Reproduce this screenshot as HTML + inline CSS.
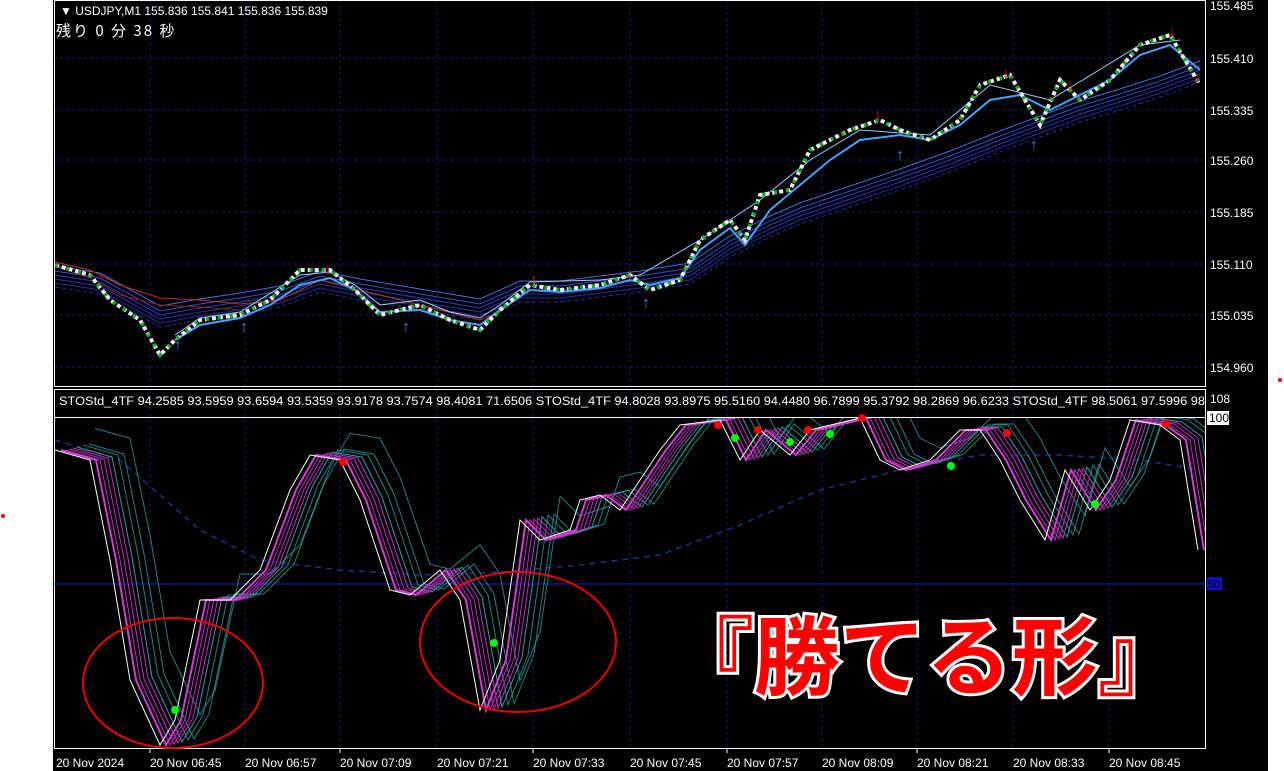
<!DOCTYPE html><html><head><meta charset="utf-8"><style>
body{margin:0;width:1284px;height:771px;background:#fff;overflow:hidden;font-family:"Liberation Sans","Noto Sans CJK JP",sans-serif}
svg{position:absolute;left:0;top:0}
</style></head><body>
<svg width="1284" height="771" viewBox="0 0 1284 771" font-family="Liberation Sans, Noto Sans CJK JP, sans-serif">
<rect x="53" y="0" width="1215" height="771" fill="#000"/>
<g stroke="#1a1a6a" stroke-dasharray="3,3" stroke-width="1">
<line x1="54" y1="58" x2="1206" y2="58"/><line x1="54" y1="110" x2="1206" y2="110"/><line x1="54" y1="160" x2="1206" y2="160"/><line x1="54" y1="212" x2="1206" y2="212"/><line x1="54" y1="264" x2="1206" y2="264"/><line x1="54" y1="315" x2="1206" y2="315"/><line x1="54" y1="367" x2="1206" y2="367"/>
<line x1="150" y1="0" x2="150" y2="748"/><line x1="245" y1="0" x2="245" y2="748"/><line x1="340" y1="0" x2="340" y2="748"/><line x1="437" y1="0" x2="437" y2="748"/><line x1="533" y1="0" x2="533" y2="748"/><line x1="630" y1="0" x2="630" y2="748"/><line x1="727" y1="0" x2="727" y2="748"/><line x1="822" y1="0" x2="822" y2="748"/><line x1="917" y1="0" x2="917" y2="748"/><line x1="1013" y1="0" x2="1013" y2="748"/><line x1="1109" y1="0" x2="1109" y2="748"/>
</g>
<defs><polyline id="ma" fill="none" points="55,285 100,292 160,325 200,318 240,312 280,305 320,290 360,298 420,308 480,318 520,300 560,300 600,295 640,290 690,282 730,255 770,235 800,222 850,205 900,188 950,170 1000,150 1040,135 1080,120 1120,108 1160,95 1200,80"/></defs>
<g stroke-width="1">
<use href="#ma" stroke="#2030a0" transform="translate(0,-2)"/><use href="#ma" stroke="#2535b0" transform="translate(0,-6)"/><use href="#ma" stroke="#2a40c0" transform="translate(0,-10)"/><use href="#ma" stroke="#3050d0" transform="translate(0,-14)"/><use href="#ma" stroke="#4070e0" transform="translate(0,-19)"/><use href="#ma" stroke="#2030a0" stroke-dasharray="4,3" transform="translate(0,2)"/>
</g>
<g fill="none" stroke-width="1">
<polyline stroke="#c03020" points="55,262 90,270 120,285 160,298 200,300 240,304 280,300 320,280 360,290 400,300 440,310 480,320 500,312"/>
<polyline stroke="#902018" points="55,266 90,278 120,295 160,305 200,307 240,310"/>
<polyline stroke="#4aa0ff" stroke-width="2" points="175,340 200,325 240,318 270,305 300,285 330,278 355,290 380,312 420,310 450,320 480,325 500,310 530,290 560,292 600,288 630,280 650,285 680,278 700,250 730,228 745,245 770,210 800,185 830,160 860,140 900,135 930,140 960,125 990,100 1020,95 1050,110 1080,95 1110,80 1140,55 1170,45 1200,70"/>
<polyline stroke="#9fd0ff" points="175,335 200,318 240,312 300,275 330,272 355,285 380,305 420,300 450,312 480,318 500,305 530,282 600,280 640,275 700,240 760,200 810,160 860,130 930,135 990,85 1050,100 1140,45 1180,40"/>
</g>
<g stroke="#eee" stroke-width="4" fill="none">
<polyline stroke-dasharray="4,3" points="55,265 90,275 110,300 140,320 160,355 175,340 200,320 240,315 270,300 300,270 330,270 355,290 380,315 420,305 450,320 480,330 500,310 530,285 560,290 600,285 630,275 650,290 680,280 700,240 730,220 745,240 760,195 790,190 810,150 850,130 880,120 900,130 930,140 960,120 980,85 1010,75 1040,125 1060,80 1080,100 1110,80 1140,45 1170,35 1200,85"/>
<polyline stroke="#1faa2a" stroke-dasharray="3,9" points="55,265 90,275 110,300 140,320 160,355 175,340 200,320 240,315 270,300 300,270 330,270 355,290 380,315 420,305 450,320 480,330 500,310 530,285 560,290 600,285 630,275 650,290 680,280 700,240 730,220 745,240 760,195 790,190 810,150 850,130 880,120 900,130 930,140 960,120 980,85 1010,75 1040,125 1060,80 1080,100 1110,80 1140,45 1170,35 1200,85"/>
</g>
<g fill="#e02020" font-size="16" font-weight="bold"><text x="324" y="274">↓</text><text x="530" y="284">↓</text><text x="626" y="278">↓</text><text x="874" y="120">↓</text><text x="1002" y="78">↓</text><text x="1066" y="90">↓</text><text x="1168" y="36">↓</text><text x="1193" y="82">↓</text></g>
<g fill="#3a8ad8" font-size="16" font-weight="bold"><text x="174" y="350">↑</text><text x="240" y="332">↑</text><text x="402" y="332">↑</text><text x="642" y="308">↑</text><text x="896" y="160">↑</text><text x="1030" y="150">↑</text></g>
<rect x="54.5" y="0.5" width="1151" height="386" fill="none" stroke="#fff"/>
<rect x="54.5" y="389.5" width="1151" height="359" fill="none" stroke="#fff"/>
<line x1="54" y1="417.5" x2="1206" y2="417.5" stroke="#fff"/>
<line x1="54" y1="584" x2="1206" y2="584" stroke="#2020c0"/>
<rect x="1207" y="577" width="15" height="13" fill="#1010c0"/><text x="1208" y="588" font-size="11" fill="#000">50</text>
<polyline fill="none" stroke="#203080" stroke-dasharray="6,5" stroke-width="1.5" points="55,440 120,460 200,530 260,560 340,570 420,575 500,572 580,565 660,555 740,525 820,490 900,470 980,455 1060,455 1140,460 1200,470"/>
<defs><polyline id="st" fill="none" points="55,450 90,460 110,560 130,680 160,745 175,720 200,600 230,600 260,570 290,490 310,455 340,460 360,500 390,590 410,595 440,570 460,600 480,710 500,660 520,520 540,540 570,530 580,500 600,495 620,510 640,480 660,450 680,425 720,420 740,460 760,430 790,455 810,430 860,418 880,460 900,470 930,460 960,430 980,430 1000,460 1020,500 1045,540 1065,470 1090,510 1110,480 1130,420 1160,425 1180,440 1198,550"/></defs>
<clipPath id="c"><rect x="55" y="418" width="1150" height="330"/></clipPath>
<g clip-path="url(#c)">
<use href="#st" stroke="#2aa0a0" transform="translate(40,-8) scale(1,.97)" opacity=".8"/>
<use href="#st" stroke="#2aa0a0" transform="translate(34,-6)" opacity=".8"/>
<use href="#st" stroke="#2aa0a0" transform="translate(28,-5)" opacity=".8"/>
<use href="#st" stroke="#2aa0a0" transform="translate(22,-3)"/>
<use href="#st" stroke="#c030c0" transform="translate(18,-2)"/>
<use href="#st" stroke="#c030c0" transform="translate(14,-1)"/>
<use href="#st" stroke="#c030c0" transform="translate(10,0)"/>
<use href="#st" stroke="#d040d0" transform="translate(6,0)" stroke-width="2"/>
<use href="#st" stroke="#fff"/>
</g>
<g fill="#f00"><circle cx="343" cy="462" r="4"/><circle cx="718" cy="425" r="4"/><circle cx="758" cy="430" r="4"/><circle cx="808" cy="430" r="4"/><circle cx="862" cy="418" r="4"/><circle cx="1007" cy="433" r="4"/><circle cx="1166" cy="424" r="4"/><circle cx="1280" cy="380" r="2"/><circle cx="3" cy="516" r="2"/></g>
<g fill="#0f0"><circle cx="175" cy="710" r="4"/><circle cx="494" cy="643" r="4"/><circle cx="735" cy="438" r="4"/><circle cx="790" cy="442" r="4"/><circle cx="830" cy="434" r="4"/><circle cx="951" cy="466" r="4"/><circle cx="1095" cy="504" r="4"/></g>
<ellipse cx="173" cy="683" rx="90" ry="65" fill="none" stroke="#e00" stroke-width="2"/>
<ellipse cx="518" cy="642" rx="98" ry="70" fill="none" stroke="#e00" stroke-width="2"/>
<text x="668" y="688" font-size="86" font-weight="bold" fill="#f00" stroke="#fff" stroke-width="6" paint-order="stroke" font-family="Noto Sans CJK JP, sans-serif">『勝てる形』</text>
<g fill="#fff" font-size="12">
<text x="60" y="15">▼ USDJPY,M1  155.836 155.841 155.836 155.839</text>
<text x="56" y="36" font-size="15" font-family="Noto Sans CJK JP, sans-serif" letter-spacing="2">残り 0 分 38 秒</text>
<text x="59" y="405" textLength="1146" lengthAdjust="spacingAndGlyphs">STOStd_4TF 94.2585 93.5959 93.6594 93.5359 93.9178 93.7574 98.4081 71.6506  STOStd_4TF 94.8028 93.8975 95.5160 94.4480 96.7899 95.3792 98.2869 96.6233  STOStd_4TF 98.5061 97.5996 98</text>
<text x="1210" y="10">155.485</text><text x="1210" y="63">155.410</text><text x="1210" y="115">155.335</text><text x="1210" y="165">155.260</text><text x="1210" y="217">155.185</text><text x="1210" y="269">155.110</text><text x="1210" y="320">155.035</text><text x="1210" y="372">154.960</text>
<text x="1210" y="403">108</text>
<rect x="1207" y="411" width="22" height="14" fill="#fff"/><text x="1209" y="422" fill="#000">100</text>
<text x="56" y="767">20 Nov 2024</text><text x="150" y="767">20 Nov 06:45</text><text x="245" y="767">20 Nov 06:57</text><text x="340" y="767">20 Nov 07:09</text><text x="437" y="767">20 Nov 07:21</text><text x="533" y="767">20 Nov 07:33</text><text x="630" y="767">20 Nov 07:45</text><text x="727" y="767">20 Nov 07:57</text><text x="822" y="767">20 Nov 08:09</text><text x="917" y="767">20 Nov 08:21</text><text x="1013" y="767">20 Nov 08:33</text><text x="1109" y="767">20 Nov 08:45</text>
</g>
<g stroke="#fff"><line x1="150" y1="749" x2="150" y2="753"/><line x1="340" y1="749" x2="340" y2="753"/><line x1="533" y1="749" x2="533" y2="753"/><line x1="727" y1="749" x2="727" y2="753"/><line x1="917" y1="749" x2="917" y2="753"/><line x1="1109" y1="749" x2="1109" y2="753"/></g>
</svg>
</body></html>
